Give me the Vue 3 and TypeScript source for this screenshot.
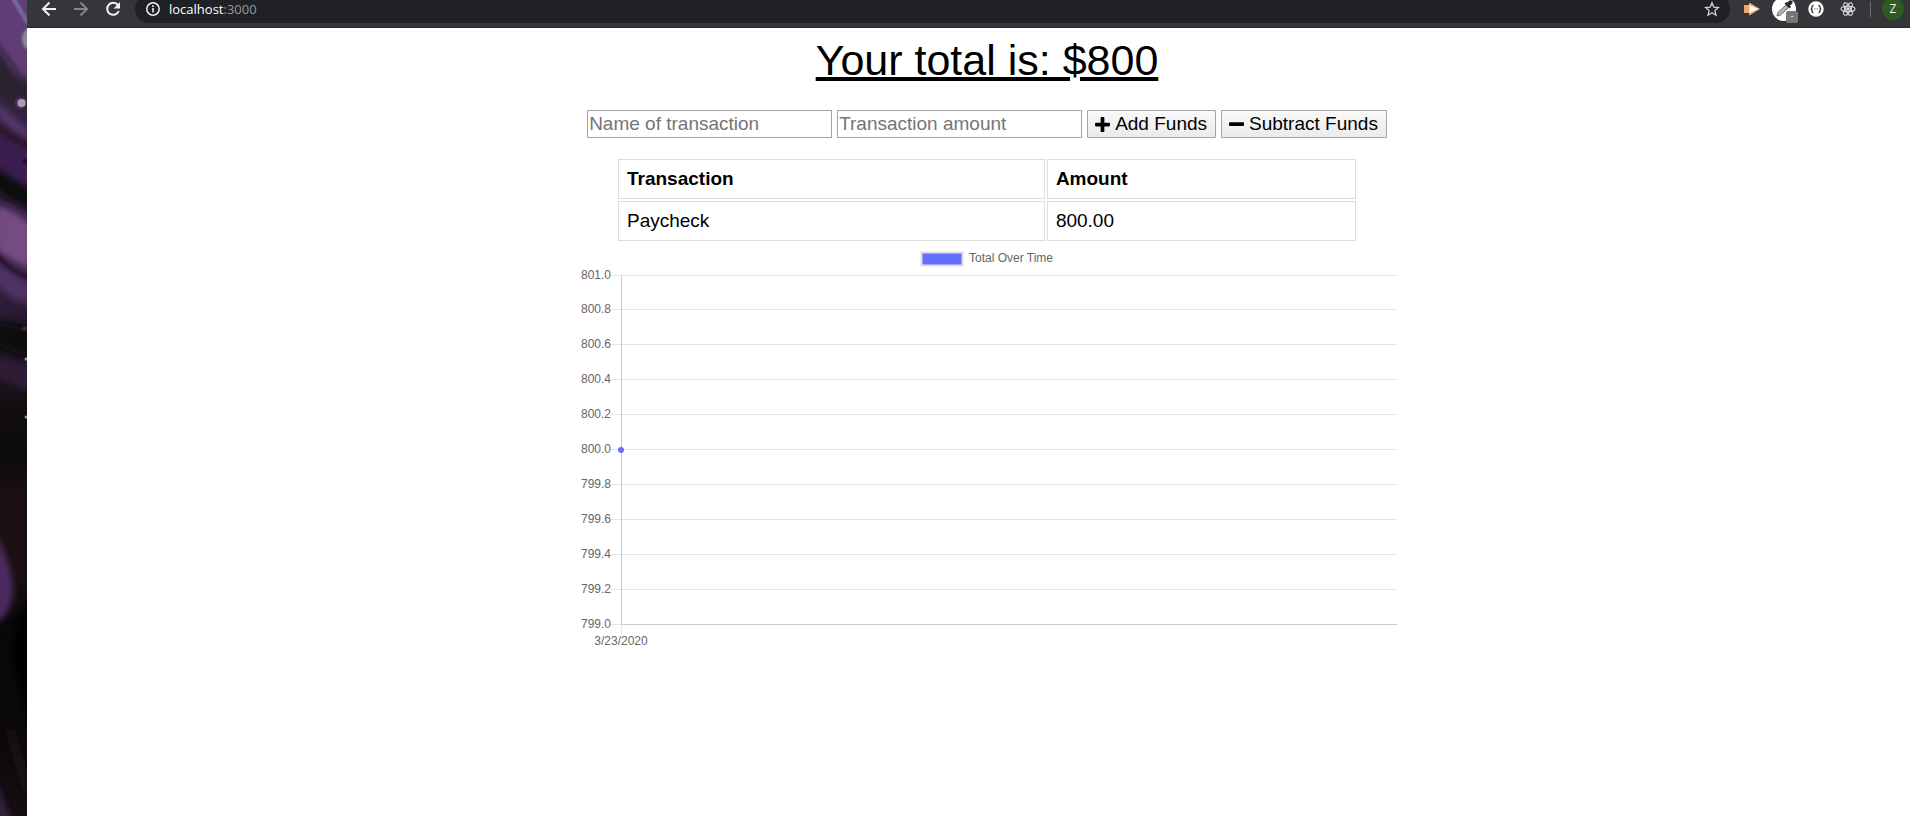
<script setup lang="ts">
import { computed, ref } from 'vue'

interface Transaction {
  name: string
  amount: number
}

const name = ref('')
const amount = ref('')
const transactions = ref<Transaction[]>([{ name: 'Paycheck', amount: 800 }])

const total = computed(() => transactions.value.reduce((sum, t) => sum + t.amount, 0))

function record(sign: 1 | -1) {
  const value = Number(amount.value)
  if (!name.value || !value) return
  transactions.value.push({ name: name.value, amount: sign * value })
  name.value = ''
  amount.value = ''
}

const ticks = computed(() =>
  Array.from({ length: 11 }, (_, i) => ({
    label: (total.value + 1 - i * 0.2).toFixed(1),
    y: Math.floor(32 + i * 34.9) + 0.5,
  })),
)
</script>

<template>
  <div class="desktop">
    <svg class="wallpaper" viewBox="0 0 27 816" preserveAspectRatio="none" aria-hidden="true">
      <defs>
        <linearGradient id="base" x1="0" y1="0" x2="0" y2="1">
          <stop offset="0" stop-color="#573a6c" />
          <stop offset="0.06" stop-color="#4a3059" />
          <stop offset="0.11" stop-color="#302438" />
          <stop offset="0.16" stop-color="#38204a" />
          <stop offset="0.2" stop-color="#2c1a3a" />
          <stop offset="0.3" stop-color="#40264f" />
          <stop offset="0.38" stop-color="#2c1c35" />
          <stop offset="0.41" stop-color="#100d10" />
          <stop offset="0.45" stop-color="#26182c" />
          <stop offset="0.5" stop-color="#110d10" />
          <stop offset="0.56" stop-color="#0d0b0c" />
          <stop offset="0.61" stop-color="#1c1014" />
          <stop offset="0.7" stop-color="#1b1013" />
          <stop offset="0.76" stop-color="#090808" />
          <stop offset="0.9" stop-color="#0b0909" />
          <stop offset="1" stop-color="#150d13" />
        </linearGradient>
        <filter id="soft" x="-50%" y="-50%" width="200%" height="200%"><feGaussianBlur stdDeviation="3" /></filter>
        <filter id="fine" x="-50%" y="-50%" width="200%" height="200%"><feGaussianBlur stdDeviation="1" /></filter>
      </defs>
      <rect width="27" height="816" fill="url(#base)" />
      <g filter="url(#soft)">
        <path d="M-5 -8H32V80Q12 72 6 54L-5 36Z" fill="#5f3e74" />
        <path d="M-5 48Q6 62 14 76L32 86V114Q12 108 -5 88Z" fill="#2c242f" />
        <path d="M-5 100Q14 120 32 132V140Q10 132 -5 112Z" fill="#543769" />
        <path d="M-5 120Q18 134 32 144V152Q10 144 -5 126Z" fill="#281626" />
        <path d="M-5 132L32 152V184Q14 180 -5 162Z" fill="#3b1d4f" />
        <path d="M-5 168Q14 178 32 190V210Q12 204 -5 190Z" fill="#0c080a" />
        <path d="M-5 206Q14 208 32 226V268Q14 264 -5 248Z" fill="#754b83" />
        <path d="M-5 264Q12 270 32 286V302Q12 304 -5 282Z" fill="#4e3164" />
        <path d="M-5 322L32 330V358Q14 352 -5 344Z" fill="#0d0a0c" />
        <path d="M-5 358Q14 362 32 368V392L-5 376Z" fill="#2f1b36" />
        <path d="M-5 536Q8 552 13 586Q14 612 -5 624Z" fill="#4c2c61" />
        <path d="M32 594Q14 616 12 660L32 740Z" fill="#060606" />
        <path d="M-5 780L12 820H-5Z" fill="#34213f" />
        <path d="M10 730L27 790" stroke="#20141a" stroke-width="5" />
      </g>
      <g filter="url(#fine)" fill="none">
        <path d="M13 -2L29 25" stroke="#75709f" stroke-width="4" />
        <path d="M-2 256Q12 272 29 278" stroke="#2b182c" stroke-width="4" />
        <path d="M-2 46Q12 60 20 76" stroke="#3c294b" stroke-width="2" />
        <path d="M22 329L28 328" stroke="#654179" stroke-width="2" />
        <ellipse cx="28" cy="39" rx="6" ry="10" fill="#8c8892" />
        <circle cx="21" cy="103" r="6" fill="#553268" />
      </g>
      <circle cx="21.5" cy="103" r="4" fill="#a79fae" />
      <circle cx="26" cy="359" r="1.5" fill="#a795ad" />
      <circle cx="26" cy="417" r="1.5" fill="#8f88aa" />
      <circle cx="25" cy="161" r="2.5" fill="#211125" />
    </svg>

    <div class="browser">
      <header class="toolbar">
        <div class="toolbar-row">
          <nav class="nav-buttons" aria-label="Browser navigation">
            <button type="button" aria-label="Back">
              <svg viewBox="0 0 16 16"><path d="M15 8H2M8.500 1.500L2 8l6.500 6.500" fill="none" stroke="#f1f1f2" stroke-width="2" /></svg>
            </button>
            <button type="button" aria-label="Forward">
              <svg viewBox="0 0 16 16"><path d="M1 8h13M7.500 1.500L14 8l-6.500 6.500" fill="none" stroke="#86868a" stroke-width="2" /></svg>
            </button>
            <button type="button" aria-label="Reload">
              <svg viewBox="0 0 16 16">
                <path d="M13 4.200A6 6 0 1 0 13.800 10" fill="none" stroke="#f1f1f2" stroke-width="2" />
                <path d="M15 1v6.500H8.500z" fill="#f1f1f2" />
              </svg>
            </button>
          </nav>
          <div class="address">
            <svg viewBox="0 0 16 16">
              <circle cx="8" cy="8" r="6.200" fill="none" stroke="#f1f1f2" stroke-width="1.500" />
              <path d="M8 7v4.500M8 4.300v1.700" stroke="#f1f1f2" stroke-width="1.600" />
            </svg>
            <span class="url">localhost<span class="port">:3000</span></span>
            <button type="button" aria-label="Bookmark">
              <svg viewBox="0 0 16 16"><path d="M8 1.800l1.800 4.300 4.700.4-3.600 3.100 1.100 4.600L8 11.800l-4 2.400 1.100-4.600L1.500 6.500l4.700-.4z" fill="none" stroke="#d6d4d8" stroke-width="1.300" /></svg>
            </button>
          </div>
          <div class="extensions">
            <span class="slot">
              <svg viewBox="0 0 16 16">
                <path d="M0 4h5v8H0z" fill="#f3a766" />
                <path d="M5 1.500L16 8 5 14.500z" fill="#f5b57d" />
                <path d="M5.500 4.500L14 8l-8.500 3.500z" fill="#fff" />
              </svg>
            </span>
            <span class="slot">
              <svg class="picker" viewBox="0 0 24 24">
                <circle cx="12" cy="12" r="12" fill="#fff" />
                <path d="M5 19l1-3.500L14 8l2.500 2.500-8 7.500z" fill="#b6b6ba" stroke="#66666c" />
                <path d="M12.500 6.500l5 5 1.500-1.500-1-1.200 2-2c2-2-1-5-3-3l-2 2L14 5z" fill="#29292f" />
              </svg>
              <span class="badge">-</span>
            </span>
            <span class="slot">
              <svg viewBox="0 0 16 16">
                <circle cx="8" cy="8" r="7.700" fill="#fff" />
                <path d="M5.500 4.500q-1.500 0-1.500 1.700T2.800 8q1.200 0 1.200 1.800t1.500 1.700M10.500 4.500q1.500 0 1.500 1.700T13.200 8q-1.200 0-1.200 1.800t-1.500 1.700" fill="none" stroke="#333338" stroke-width="1.300" />
                <path d="M6 8h4" stroke="#77777c" stroke-width="1.200" stroke-dasharray="1 .5" />
              </svg>
            </span>
            <span class="slot">
              <svg viewBox="0 0 16 16" fill="none" stroke="#dedee1" stroke-width="1.100">
                <ellipse cx="8" cy="8" rx="7" ry="2.700" />
                <ellipse cx="8" cy="8" rx="7" ry="2.700" transform="rotate(60 8 8)" />
                <ellipse cx="8" cy="8" rx="7" ry="2.700" transform="rotate(120 8 8)" />
                <circle cx="8" cy="8" r="1.200" fill="#dedee1" />
              </svg>
            </span>
          </div>
          <span class="divider"></span>
          <button type="button" class="avatar" aria-label="Profile Z">Z</button>
        </div>
      </header>

      <main class="page">
        <h1>Your total is: ${{ total }}</h1>

        <form class="entry" @submit.prevent="record(1)">
          <input v-model="name" type="text" placeholder="Name of transaction" aria-label="Name of transaction" />
          <input v-model="amount" type="text" placeholder="Transaction amount" aria-label="Transaction amount" />
          <button type="submit">
            <svg viewBox="0 0 448 448" aria-hidden="true">
              <path d="M416 168H280V32c0-17.700-14.300-32-32-32h-48c-17.700 0-32 14.300-32 32v136H32c-17.700 0-32 14.300-32 32v48c0 17.700 14.300 32 32 32h136v136c0 17.700 14.300 32 32 32h48c17.700 0 32-14.300 32-32V280h136c17.700 0 32-14.300 32-32v-48c0-17.700-14.300-32-32-32z" />
            </svg>
            Add Funds
          </button>
          <button type="button" @click="record(-1)">
            <svg viewBox="0 0 448 448" aria-hidden="true">
              <path d="M416 158H32c-17.700 0-32 14.300-32 32v48c0 17.700 14.300 32 32 32h384c17.700 0 32-14.300 32-32v-48c0-17.700-14.300-32-32-32z" />
            </svg>
            Subtract Funds
          </button>
        </form>

        <table>
          <thead>
            <tr>
              <th class="name-col" scope="col">Transaction</th>
              <th scope="col">Amount</th>
            </tr>
          </thead>
          <tbody>
            <tr v-for="(t, i) in transactions" :key="i">
              <td>{{ t.name }}</td>
              <td>{{ t.amount.toFixed(2) }}</td>
            </tr>
          </tbody>
        </table>

        <svg class="chart" viewBox="0 0 820 410" role="img" aria-label="Total Over Time">
          <rect x="344.500" y="9.500" width="41" height="13" fill="#666eff" stroke="#d9dfe6" stroke-width="2" />
          <text x="392" y="19">Total Over Time</text>
          <g v-for="tick in ticks" :key="tick.label">
            <line x1="34" x2="820" :y1="tick.y" :y2="tick.y" class="grid" />
            <text x="34" :y="tick.y + 3" text-anchor="end">{{ tick.label }}</text>
          </g>
          <path d="M44.500 32V391" class="grid" />
          <path d="M44.500 32V381.500H820" class="axis" />
          <circle cx="44" cy="207" r="3" fill="#666eff" />
          <text x="44" y="402" text-anchor="middle">3/23/2020</text>
        </svg>
      </main>
    </div>
  </div>
</template>

<style>
body {
  margin: 0;
}
</style>

<style scoped>
.desktop {
  display: flex;
  min-height: 100vh;
  font-family: "Liberation Sans", Arial, sans-serif;
  color: #000;
  background: #fff;
  overflow: hidden;
}

.wallpaper {
  flex: none;
  width: 27px;
  height: 100vh;
}

.browser {
  flex: 1;
  min-width: 0;
}

.toolbar {
  box-sizing: border-box;
  height: 28px;
  overflow: hidden;
  background: #35363a;
  border-bottom: 1px solid #28292c;
}

.toolbar-row {
  display: flex;
  align-items: center;
  height: 36px;
  margin-top: -9px;
  padding: 0 6px 0 14px;
}

.toolbar svg {
  display: block;
  width: 16px;
  height: 16px;
}

.toolbar button {
  padding: 0;
  border: 0;
  background: none;
}

.nav-buttons {
  display: flex;
  gap: 16px;
}

.address {
  box-sizing: border-box;
  flex: 1;
  display: flex;
  align-items: center;
  gap: 8px;
  height: 28px;
  margin: 0 6px 0 14px;
  padding: 0 10px;
  border-radius: 14px;
  background: #202124;
}

.url {
  flex: 1;
  font: 13px/20px "Open Sans", "Noto Sans", sans-serif;
  color: #fff;
}

.port {
  color: #9a96a3;
}

.extensions {
  display: flex;
}

.slot {
  position: relative;
  display: flex;
  justify-content: center;
  align-items: center;
  width: 32px;
  height: 24px;
}

.toolbar .picker {
  width: 24px;
  height: 24px;
}

.badge {
  position: absolute;
  right: 2px;
  bottom: -2px;
  width: 12px;
  height: 12px;
  border-radius: 2px;
  background: #77777a;
  color: #fff;
  font-size: 9px;
  line-height: 11px;
  text-align: center;
}

.divider {
  width: 1px;
  height: 16px;
  margin: 0 11px 0 6px;
  background: #6a6b70;
}

.toolbar .avatar {
  width: 22px;
  height: 22px;
  border-radius: 50%;
  background: #2f5b21;
  color: #f0f3ef;
  font: 12px/22px "Open Sans", sans-serif;
}

.page {
  display: flex;
  flex-direction: column;
  align-items: center;
  padding: 7px 0 0 37px;
}

h1 {
  margin: 0 0 25px;
  font-size: 43px;
  font-weight: 400;
  line-height: 50px;
  text-decoration: underline;
  text-decoration-thickness: 4px;
  text-underline-offset: 2px;
}

.entry {
  display: flex;
  gap: 5px;
  margin-bottom: 19px;
}

.entry input,
.entry button {
  box-sizing: border-box;
  height: 28px;
  border: 1px solid #a5a5a5;
  font: 19px/22px "Liberation Sans", Arial, sans-serif;
  color: #000;
}

.entry input {
  width: 245px;
  padding: 1px;
  background: #fff;
}

.entry input::placeholder {
  color: #757575;
  opacity: 1;
}

.entry button {
  display: flex;
  align-items: center;
  gap: 5px;
  padding: 0 8px 0 7px;
  border-radius: 1px;
  background: linear-gradient(#f9f9f9, #ebebeb);
}

.entry svg {
  width: 15px;
  height: 15px;
}

table {
  width: 100%;
  max-width: 742px;
  border-spacing: 2px;
  font-size: 19px;
  line-height: 22px;
  table-layout: fixed;
}

th,
td {
  padding: 8px;
  border: 1px solid #dddddd;
  text-align: left;
}

.name-col {
  box-sizing: border-box;
  width: 58%;
}

.chart {
  width: 100%;
  max-width: 820px;
}

.chart text {
  font-size: 12px;
  fill: #666;
}

.grid {
  fill: none;
  stroke: #e5e5e5;
}

.axis {
  fill: none;
  stroke: #cacaca;
}
</style>
